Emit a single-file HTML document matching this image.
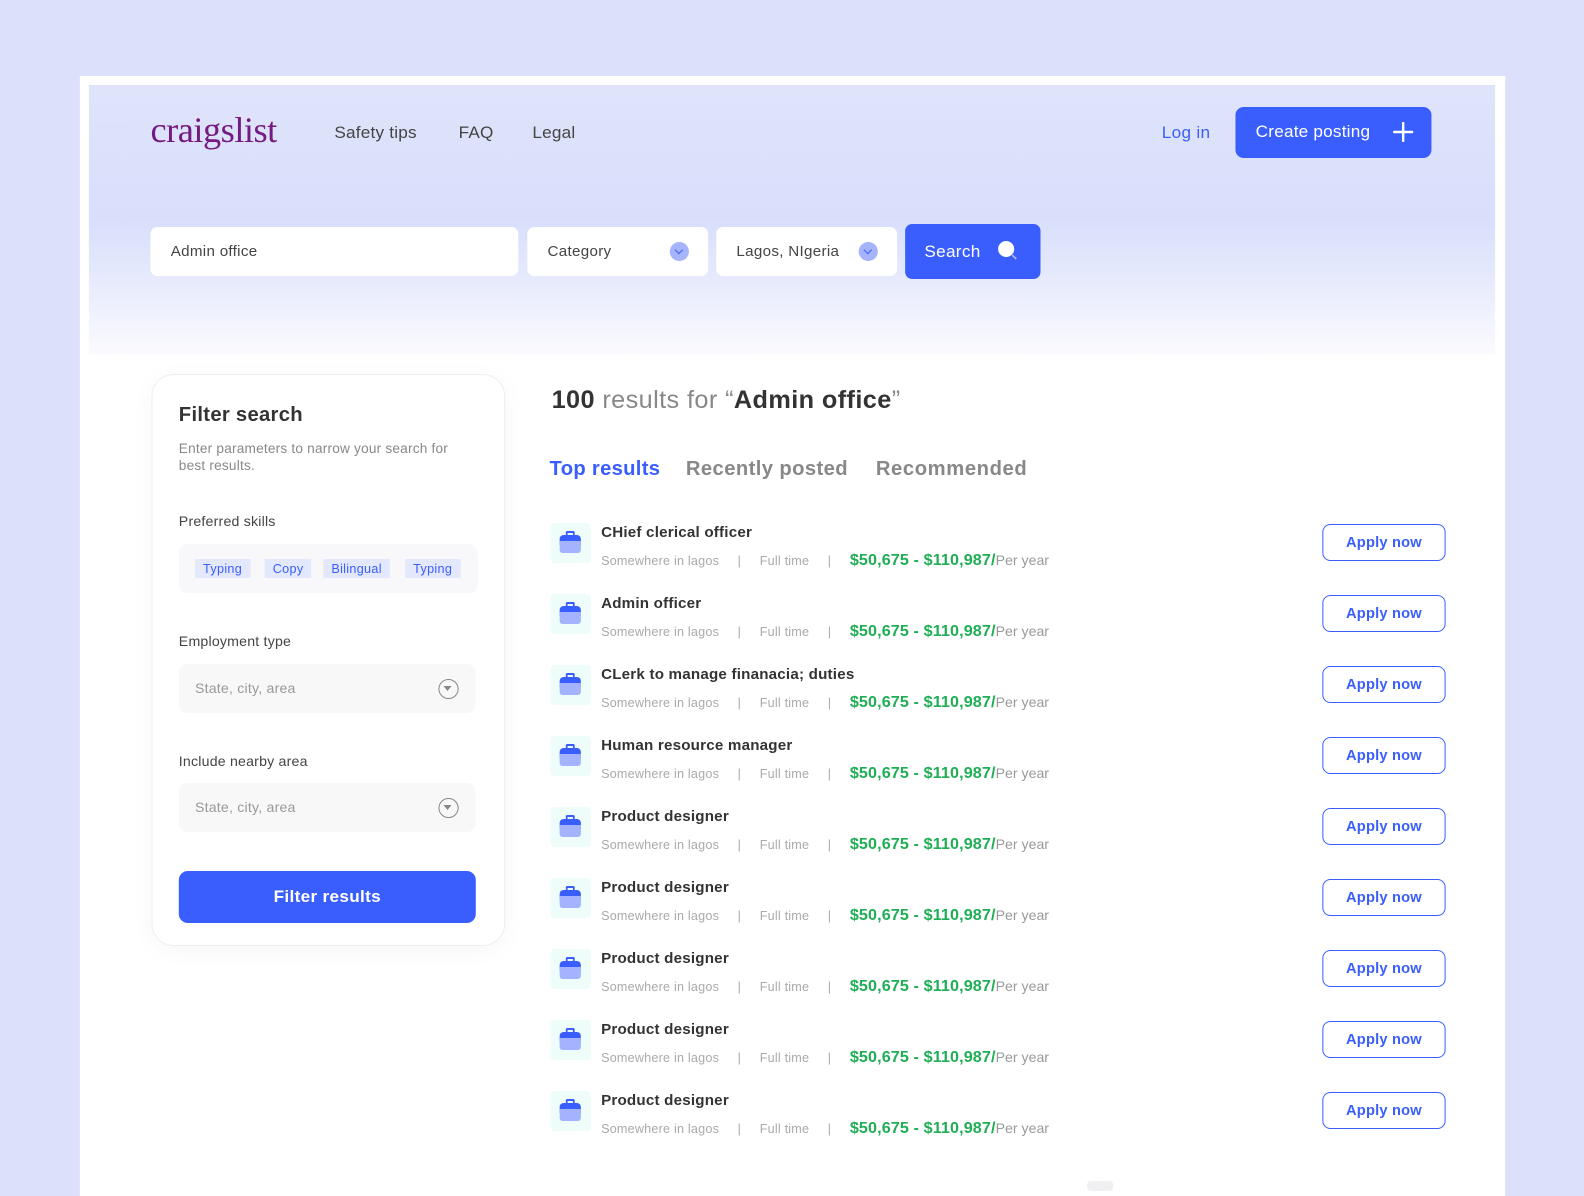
<!DOCTYPE html>
<html><head><meta charset="utf-8">
<style>
*{margin:0;padding:0;box-sizing:border-box}
body{width:1584px;height:1188px;overflow:hidden;background:#dbe1fb;font-family:"Liberation Sans",sans-serif;position:relative;color:#333}
#wrap{position:absolute;left:0;top:0;width:1568px;height:1188px;transform:scale(1.0102,1);transform-origin:0 0}
.abs{position:absolute}
#frame{left:79px;top:76px;width:1411px;height:1120px;background:#fff}
#hdr{left:88px;top:85px;width:1392px;height:270px;background:linear-gradient(180deg,#dfe4fb 0%,#d9dffb 50%,#e6eafc 72%,#fbfbfe 100%)}
.logo{left:149px;top:109px;font-family:"Liberation Serif",serif;font-size:36px;color:#741a80;letter-spacing:-0.5px}
.nav{top:123px;font-size:17px;color:#444;letter-spacing:0.2px}
.login{left:1150px;top:123px;font-size:17px;color:#3b5efc;letter-spacing:0.3px}
.cbtn{left:1223px;top:107px;width:194px;height:51px;background:#3a5efd;border-radius:8px;color:#fff;font-size:17px;padding:15px 0 0 20px;letter-spacing:0.2px}
.inp{top:227px;height:49px;background:#fff;border-radius:7px;font-size:15px;color:#444;padding:16px 0 0 20px;letter-spacing:0.3px}
.dd{width:19px;height:19px;border-radius:50%;background:#a6b4fb;position:absolute;right:19px;top:15px}
.dd:after{content:"";position:absolute;left:6px;top:5px;width:5px;height:5px;border-right:1.5px solid #3a5efd;border-bottom:1.5px solid #3a5efd;transform:rotate(45deg)}
.sbtn{left:896px;top:224px;width:134px;height:55px;background:#3a5efd;border-radius:7px;color:#fff;font-size:17px;padding:18px 0 0 19px;letter-spacing:0.3px}
#card{left:150px;top:374px;width:350px;height:572px;border:1px solid #eee;border-radius:22px;background:#fff;box-shadow:0 4px 24px rgba(0,0,0,0.04)}
.lbl{left:177px;font-size:14px;color:#444;letter-spacing:0.2px}
.tags{left:177px;top:544px;width:296px;height:49px;background:#f8f8fb;border-radius:9px}
.tag{top:559px;height:19px;background:#e3e8fd;color:#3a5efd;font-size:12.5px;padding:3px 8px 0;letter-spacing:0.3px}
.sel{left:177px;width:294px;height:49px;background:#f8f8f8;border-radius:9px;font-size:14px;color:#999;padding:16px 0 0 16px;letter-spacing:0.2px}
.sel .ci{position:absolute;right:17px;top:15px;width:20px;height:20px;border:1.8px solid #888;border-radius:50%}
.sel .ci:after{content:"";position:absolute;left:4px;top:6px;border-left:4px solid transparent;border-right:4px solid transparent;border-top:5px solid #888}
.fbtn{left:177px;top:871px;width:294px;height:52px;background:#3a5efd;border-radius:9px;color:#fff;font-size:17px;text-align:center;padding-top:16px;font-weight:bold;letter-spacing:0.3px}
.row{left:545px;width:900px;height:60px}
.ic{position:absolute;left:0;top:0;width:40px;height:40px;background:#effdfa;border-radius:4px}
.ic .a{position:absolute;left:9px;top:18px;width:21px;height:12px;background:#a3b3fd;border-radius:0 0 3px 3px}
.ic .b{position:absolute;left:9px;top:12px;width:21px;height:10px;background:#3a5efd;border-radius:4px 4px 0 0}
.ic .h{position:absolute;left:15px;top:8px;width:9px;height:6px;border:2px solid #3a5efd;border-bottom:none;border-radius:2px 2px 0 0}
.t{position:absolute;left:50px;top:1px;font-size:15px;font-weight:bold;color:#333;letter-spacing:0.2px}
.m{position:absolute;left:50px;top:29px;font-size:12.5px;color:#aaa;white-space:nowrap;letter-spacing:0.2px}
.m b{color:#1fae55;font-size:16px;font-weight:bold;letter-spacing:0.1px}
.m .py{font-size:14px;color:#999;letter-spacing:0}
.ap{position:absolute;left:764px;top:1px;width:122px;height:37px;border:1.5px solid #3a5efd;border-radius:8px;color:#3a5efd;font-size:14.5px;font-weight:bold;text-align:center;padding-top:10px;letter-spacing:0.2px}
</style></head><body><div id="wrap">
<div id="frame" class="abs"></div>
<div id="hdr" class="abs"></div>
<div class="abs logo">craigslist</div>
<div class="abs nav" style="left:331px">Safety tips</div>
<div class="abs nav" style="left:454px">FAQ</div>
<div class="abs nav" style="left:527px">Legal</div>
<div class="abs login">Log in</div>
<div class="abs cbtn">Create posting
 <svg style="position:absolute;right:18px;top:15px" width="20" height="20" viewBox="0 0 20 20"><path d="M10 1V19M1 10H19" stroke="#fff" stroke-width="2.4" stroke-linecap="round"/></svg></div>
<div class="abs inp" style="left:149px;width:364px">Admin office</div>
<div class="abs inp" style="left:522px;width:179px">Category<div class="dd"></div></div>
<div class="abs inp" style="left:709px;width:179px">Lagos, NIgeria<div class="dd"></div></div>
<div class="abs sbtn">Search
 <svg style="position:absolute;left:90px;top:15px" width="24" height="24" viewBox="0 0 24 24"><circle cx="10" cy="10" r="8" fill="#fff"/><path d="M16 16L20 20" stroke="#a6b4fb" stroke-width="1.8"/></svg></div>

<div id="card" class="abs"></div>
<div class="abs" style="left:177px;top:404px;font-size:20px;font-weight:bold;color:#333;letter-spacing:0.3px">Filter search</div>
<div class="abs" style="left:177px;top:440px;font-size:13.5px;color:#888;line-height:17px;width:280px;letter-spacing:0.2px">Enter parameters to narrow your search for best results.</div>
<div class="abs lbl" style="top:513px">Preferred skills</div>
<div class="abs tags"></div>
<div class="abs tag" style="left:193px">Typing</div>
<div class="abs tag" style="left:262px">Copy</div>
<div class="abs tag" style="left:320px">Bilingual</div>
<div class="abs tag" style="left:401px">Typing</div>
<div class="abs lbl" style="top:633px">Employment type</div>
<div class="abs sel" style="top:664px">State, city, area<div class="ci"></div></div>
<div class="abs lbl" style="top:753px">Include nearby area</div>
<div class="abs sel" style="top:783px">State, city, area<div class="ci"></div></div>
<div class="abs fbtn">Filter results</div>

<div class="abs" style="left:546px;top:386px;font-size:25px;color:#888;letter-spacing:0.4px"><b style="color:#333">100</b> results for “<b style="color:#333">Admin office</b>”</div>
<div class="abs" style="left:544px;top:458px;font-size:20px;font-weight:bold;color:#3a5efd;letter-spacing:0.3px">Top results</div>
<div class="abs" style="left:679px;top:458px;font-size:20px;font-weight:bold;color:#888;letter-spacing:0.4px">Recently posted</div>
<div class="abs" style="left:867px;top:458px;font-size:20px;font-weight:bold;color:#888;letter-spacing:0.6px">Recommended</div>

<div class="abs row" style="top:523px"><div class="ic"><div class="h"></div><div class="b"></div><div class="a"></div></div><div class="t">CHief clerical officer</div><div class="m">Somewhere in lagos &nbsp;&nbsp;&nbsp;&nbsp;|&nbsp;&nbsp;&nbsp;&nbsp; Full time &nbsp;&nbsp;&nbsp;&nbsp;|&nbsp;&nbsp;&nbsp;&nbsp; <b>$50,675 - $110,987/</b><span class="py">Per year</span></div><div class="ap">Apply now</div></div>
<div class="abs row" style="top:594px"><div class="ic"><div class="h"></div><div class="b"></div><div class="a"></div></div><div class="t">Admin officer</div><div class="m">Somewhere in lagos &nbsp;&nbsp;&nbsp;&nbsp;|&nbsp;&nbsp;&nbsp;&nbsp; Full time &nbsp;&nbsp;&nbsp;&nbsp;|&nbsp;&nbsp;&nbsp;&nbsp; <b>$50,675 - $110,987/</b><span class="py">Per year</span></div><div class="ap">Apply now</div></div>
<div class="abs row" style="top:665px"><div class="ic"><div class="h"></div><div class="b"></div><div class="a"></div></div><div class="t">CLerk to manage finanacia; duties</div><div class="m">Somewhere in lagos &nbsp;&nbsp;&nbsp;&nbsp;|&nbsp;&nbsp;&nbsp;&nbsp; Full time &nbsp;&nbsp;&nbsp;&nbsp;|&nbsp;&nbsp;&nbsp;&nbsp; <b>$50,675 - $110,987/</b><span class="py">Per year</span></div><div class="ap">Apply now</div></div>
<div class="abs row" style="top:736px"><div class="ic"><div class="h"></div><div class="b"></div><div class="a"></div></div><div class="t">Human resource manager</div><div class="m">Somewhere in lagos &nbsp;&nbsp;&nbsp;&nbsp;|&nbsp;&nbsp;&nbsp;&nbsp; Full time &nbsp;&nbsp;&nbsp;&nbsp;|&nbsp;&nbsp;&nbsp;&nbsp; <b>$50,675 - $110,987/</b><span class="py">Per year</span></div><div class="ap">Apply now</div></div>
<div class="abs row" style="top:807px"><div class="ic"><div class="h"></div><div class="b"></div><div class="a"></div></div><div class="t">Product designer</div><div class="m">Somewhere in lagos &nbsp;&nbsp;&nbsp;&nbsp;|&nbsp;&nbsp;&nbsp;&nbsp; Full time &nbsp;&nbsp;&nbsp;&nbsp;|&nbsp;&nbsp;&nbsp;&nbsp; <b>$50,675 - $110,987/</b><span class="py">Per year</span></div><div class="ap">Apply now</div></div>
<div class="abs row" style="top:878px"><div class="ic"><div class="h"></div><div class="b"></div><div class="a"></div></div><div class="t">Product designer</div><div class="m">Somewhere in lagos &nbsp;&nbsp;&nbsp;&nbsp;|&nbsp;&nbsp;&nbsp;&nbsp; Full time &nbsp;&nbsp;&nbsp;&nbsp;|&nbsp;&nbsp;&nbsp;&nbsp; <b>$50,675 - $110,987/</b><span class="py">Per year</span></div><div class="ap">Apply now</div></div>
<div class="abs row" style="top:949px"><div class="ic"><div class="h"></div><div class="b"></div><div class="a"></div></div><div class="t">Product designer</div><div class="m">Somewhere in lagos &nbsp;&nbsp;&nbsp;&nbsp;|&nbsp;&nbsp;&nbsp;&nbsp; Full time &nbsp;&nbsp;&nbsp;&nbsp;|&nbsp;&nbsp;&nbsp;&nbsp; <b>$50,675 - $110,987/</b><span class="py">Per year</span></div><div class="ap">Apply now</div></div>
<div class="abs row" style="top:1020px"><div class="ic"><div class="h"></div><div class="b"></div><div class="a"></div></div><div class="t">Product designer</div><div class="m">Somewhere in lagos &nbsp;&nbsp;&nbsp;&nbsp;|&nbsp;&nbsp;&nbsp;&nbsp; Full time &nbsp;&nbsp;&nbsp;&nbsp;|&nbsp;&nbsp;&nbsp;&nbsp; <b>$50,675 - $110,987/</b><span class="py">Per year</span></div><div class="ap">Apply now</div></div>
<div class="abs row" style="top:1091px"><div class="ic"><div class="h"></div><div class="b"></div><div class="a"></div></div><div class="t">Product designer</div><div class="m">Somewhere in lagos &nbsp;&nbsp;&nbsp;&nbsp;|&nbsp;&nbsp;&nbsp;&nbsp; Full time &nbsp;&nbsp;&nbsp;&nbsp;|&nbsp;&nbsp;&nbsp;&nbsp; <b>$50,675 - $110,987/</b><span class="py">Per year</span></div><div class="ap">Apply now</div></div>
<div class="abs" style="left:1076px;top:1181px;width:26px;height:10px;background:#f0eff2;border-radius:4px"></div>
</div></body></html>
